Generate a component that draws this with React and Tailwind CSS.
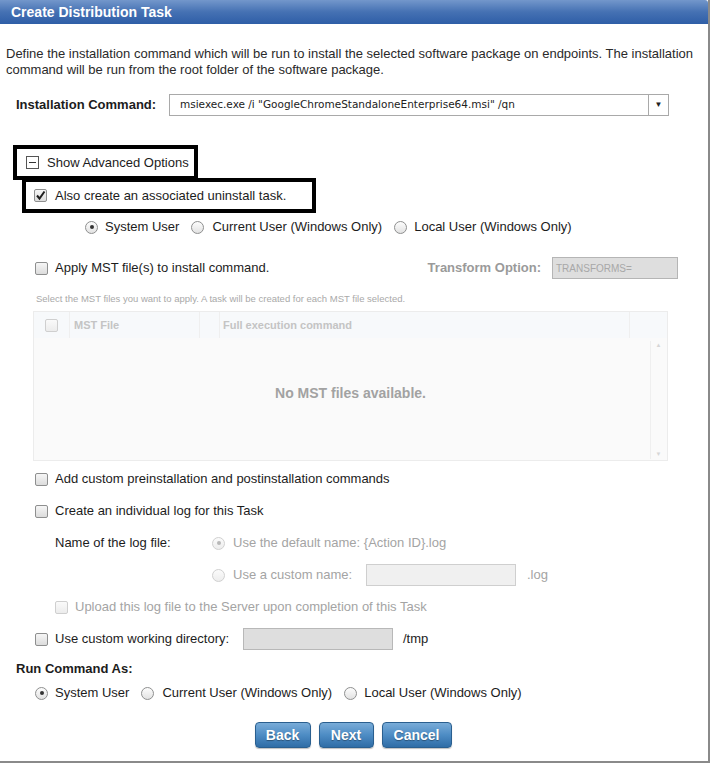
import React from "react";

function Box({ checked, disabled }) {
  return (
    <span
      className={`relative inline-block w-[13px] h-[13px] shrink-0 rounded-[2px] border ${
        disabled
          ? "border-[#cfcfcf] bg-gradient-to-b from-[#fafafa] to-[#ececec]"
          : "border-[#8e8f8f] bg-gradient-to-b from-[#f6f6f6] to-[#dcdcdc]"
      }`}
    >
      {checked && (
        <svg viewBox="0 0 13 13" className="absolute left-[-1px] top-[-1px] w-[13px] h-[13px]">
          <path d="M3 6.5 L5.5 9.5 L10.5 2.5" fill="none" stroke="#1e1e1e" strokeWidth="2" />
        </svg>
      )}
    </span>
  );
}

function Radio({ on, disabled }) {
  return (
    <span
      className={`inline-flex items-center justify-center w-[13px] h-[13px] shrink-0 rounded-full border ${
        disabled
          ? "border-[#d0d0d0] bg-gradient-to-b from-[#fbfbfb] to-[#ededed]"
          : "border-[#8e8f8f] bg-gradient-to-b from-[#fdfdfd] to-[#e2e2e2]"
      }`}
    >
      {on && (
        <span className={`w-[4px] h-[4px] rounded-full ${disabled ? "bg-[#b8b8b8]" : "bg-[#333]"}`} />
      )}
    </span>
  );
}

function Btn({ children, w }) {
  return (
    <button
      className={`${w} h-[26px] rounded-[4px] border border-[#2a5f8f] bg-gradient-to-b from-[#79acd8] via-[#4d8cc4] to-[#2f6da6] text-white text-[14px] font-bold [text-shadow:0_1px_1px_rgba(0,0,0,0.35)] shadow-[0_1px_1px_rgba(0,0,0,0.25)]`}
    >
      {children}
    </button>
  );
}

export default function App() {
  return (
    <div className="w-[710px] h-[764px] bg-white font-['Liberation_Sans',Arial,sans-serif] text-[#1c1c1c]">
      <div className="w-[710px] h-[763px] border-r-2 border-b-2 border-[#8a8a8a] flex flex-col">
        <div className="h-[24px] flex items-center pl-[11px] bg-gradient-to-b from-[#7397cb] via-[#4571b3] to-[#2e5ea7] rounded-tr-[3px]">
          <span className="text-white text-[14px] font-bold">Create Distribution Task</span>
        </div>

        <p className="mt-[22px] pl-[6px] pr-[4px] text-[13px] leading-[16px] text-[#2a2a2a]">
          Define the installation command which will be run to install the selected software package on endpoints. The installation command will be run from the root folder of the software package.
        </p>

        <div className="mt-[16px] h-[22px] flex items-center">
          <span className="ml-[16px] w-[153px] text-[13px] font-bold">Installation Command:</span>
          <div className="w-[500px] h-[22px] flex border border-[#a9a9a9] bg-white">
            <span className="flex-1 pl-[10px] flex items-center font-['DejaVu_Sans',Verdana,sans-serif] text-[10.5px] text-[#222]">
              msiexec.exe /i "GoogleChromeStandaloneEnterprise64.msi" /qn
            </span>
            <span className="w-[20px] border-l border-[#a9a9a9] flex items-center justify-center text-[8px] text-[#222]">
              ▼
            </span>
          </div>
        </div>

        <div className="mt-[29px] ml-[13px] w-[185px] h-[35px] border-4 border-black flex items-center pl-[9px]">
          <span className="w-[13px] h-[13px] border border-[#555] flex items-center justify-center">
            <span className="w-[7px] h-[1px] bg-[#333]" />
          </span>
          <span className="ml-[8px] text-[13px]">Show Advanced Options</span>
        </div>
        <div className="mt-[-2px] ml-[22px] w-[294px] h-[35px] border-4 border-black flex items-center pl-[8px]">
          <Box checked />
          <span className="ml-[8px] text-[13px]">Also create an associated uninstall task.</span>
        </div>

        <div className="h-[28px] flex items-center pl-[85px] text-[13px]">
          <Radio on />
          <span className="ml-[7px]">System User</span>
          <span className="ml-[12px]" />
          <Radio />
          <span className="ml-[8px]">Current User (Windows Only)</span>
          <span className="ml-[12px]" />
          <Radio />
          <span className="ml-[7px]">Local User (Windows Only)</span>
        </div>

        <div className="mt-[16px] h-[22px] flex items-center pl-[35px] text-[13px]">
          <Box />
          <span className="ml-[7px]">Apply MST file(s) to install command.</span>
          <span className="ml-auto text-[#9a9a9a] font-bold">Transform Option:</span>
          <span className="ml-[11px] mr-[30px] w-[126px] h-[22px] border border-[#b5b5b5] bg-[#dedede] flex items-center pl-[3px] text-[10px] text-[#a8a8a8]">
            TRANSFORMS=
          </span>
        </div>

        <div className="mt-[13px] h-[14px] pl-[36px] flex items-center text-[9.5px] text-[#a9a9a9]">
          Select the MST files you want to apply. A task will be created for each MST file selected.
        </div>

        <div className="mt-[5px] ml-[33px] w-[635px] h-[150px] border border-[#ececec] bg-[#fafafa] flex flex-col">
          <div className="h-[26px] flex bg-[#f7f9fb] text-[11px] font-bold text-[#c4c4c4]">
            <div className="w-[36px] flex items-center justify-center border-r border-[#efefef]">
              <Box disabled />
            </div>
            <div className="w-[130px] pl-[4px] flex items-center border-r border-[#efefef]">MST File</div>
            <div className="w-[20px] border-r border-[#efefef]" />
            <div className="flex-1 pl-[3px] flex items-center border-r border-[#efefef]">Full execution command</div>
            <div className="w-[37px]" />
          </div>
          <div className="flex-1 flex">
            <div className="flex-1 flex items-center justify-center text-[14px] font-bold text-[#a2a2a2] pl-[17px] pb-[12px]">
              No MST files available.
            </div>
            <div className="w-[16px] mt-[3px] mb-[1px] mr-[1px] border-l border-[#efefef] flex flex-col justify-between items-center text-[6px] text-[#d6d6d6]">
              <span>▲</span>
              <span>▼</span>
            </div>
          </div>
        </div>

        <div className="h-[2px]" />

        <div className="h-[32px] flex items-center pl-[35px] text-[13px]">
          <Box />
          <span className="ml-[7px]">Add custom preinstallation and postinstallation commands</span>
        </div>
        <div className="h-[32px] flex items-center pl-[35px] text-[13px]">
          <Box />
          <span className="ml-[7px]">Create an individual log for this Task</span>
        </div>
        <div className="h-[32px] flex items-center pl-[55px] text-[13px]">
          <span className="w-[157px]">Name of the log file:</span>
          <Radio on disabled />
          <span className="ml-[8px] text-[#a4a4a4]">Use the default name: {"{Action ID}"}.log</span>
        </div>
        <div className="h-[32px] flex items-center pl-[212px] text-[13px]">
          <Radio disabled />
          <span className="ml-[8px] w-[133px] text-[#a4a4a4]">Use a custom name:</span>
          <span className="w-[150px] h-[22px] border border-[#cfcfcf] bg-[#f0f0f0]" />
          <span className="ml-[11px] text-[#a4a4a4]">.log</span>
        </div>
        <div className="h-[32px] flex items-center pl-[55px] text-[13px]">
          <Box disabled />
          <span className="ml-[7px] text-[#a4a4a4]">Upload this log file to the Server upon completion of this Task</span>
        </div>
        <div className="h-[32px] flex items-center pl-[35px] text-[13px]">
          <Box />
          <span className="ml-[7px] w-[188px]">Use custom working directory:</span>
          <span className="w-[150px] h-[22px] border border-[#b8b8b8] bg-[#dedede]" />
          <span className="ml-[10px]">/tmp</span>
        </div>

        <div className="h-[28px] flex items-center pl-[16px] text-[13px] font-bold">Run Command As:</div>
        <div className="h-[20px] flex items-center pl-[35px] text-[13px]">
          <Radio on />
          <span className="ml-[7px]">System User</span>
          <span className="ml-[12px]" />
          <Radio />
          <span className="ml-[8px]">Current User (Windows Only)</span>
          <span className="ml-[12px]" />
          <Radio />
          <span className="ml-[7px]">Local User (Windows Only)</span>
        </div>

        <div className="mt-[19px] flex justify-center gap-[8px] pr-[2px]">
          <Btn w="w-[56px]">Back</Btn>
          <Btn w="w-[55px]">Next</Btn>
          <Btn w="w-[70px]">Cancel</Btn>
        </div>
      </div>
    </div>
  );
}
